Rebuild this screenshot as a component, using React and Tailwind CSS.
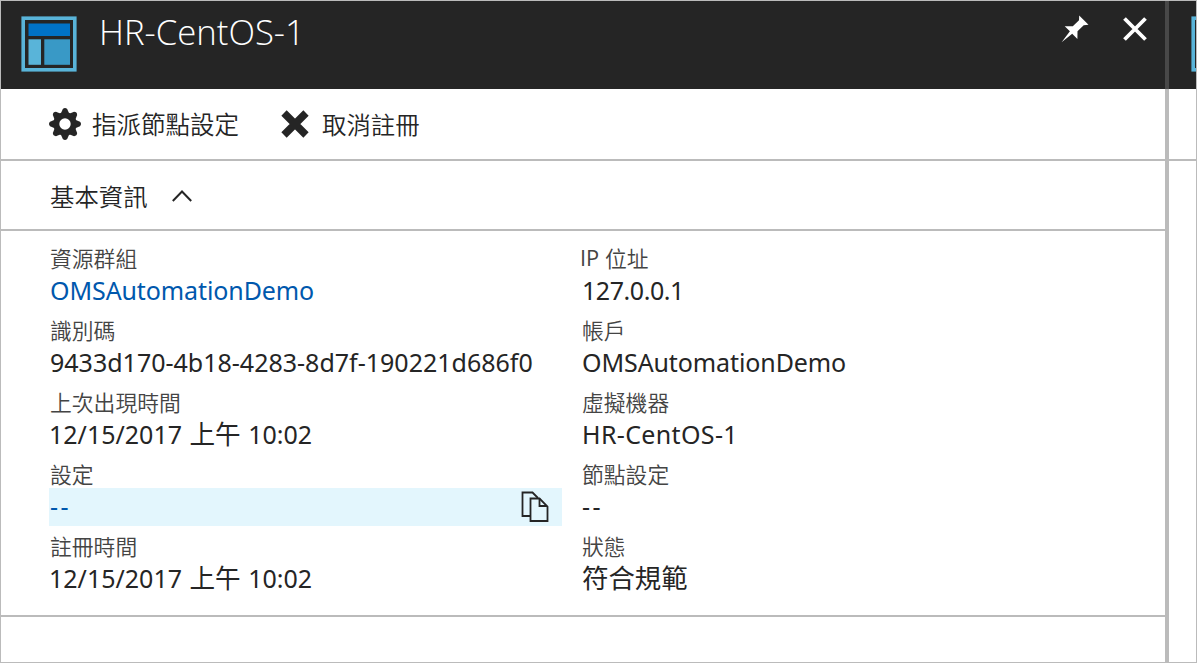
import React from "react";

const LATIN = "font-['Noto_Sans','Noto_Sans_CJK_TC',sans-serif]";
const CJK = "font-['Noto_Sans_CJK_TC',sans-serif]";

function NodeIcon() {
  return (
    <svg className="h-14 w-14 shrink-0" viewBox="0 0 56 56">
      <rect x="2.2" y="2.2" width="51.6" height="51.6" fill="#252525" stroke="#59b4d9" strokeWidth="3.6" />
      <rect x="7.5" y="7.5" width="41.5" height="12.5" fill="#0072c6" />
      <rect x="7.5" y="23.3" width="12.5" height="25.5" fill="#59b4d9" />
      <rect x="23.3" y="23.3" width="25.7" height="25.5" fill="#3999c6" />
    </svg>
  );
}

function PinIcon() {
  return (
    <svg className="h-7 w-7" viewBox="0 0 28 28" fill="#fff">
      <path d="M18.2 0.5L27.5 9.7L22.7 10.2L16.5 16.3L16.4 24L11.2 18.8L0.6 27.3L8.9 16.3L3.7 11.2L11.8 11.2L18 5.2Z" />
    </svg>
  );
}

function GearIcon() {
  const teeth = [0, 45, 90, 135, 180, 225, 270, 315];
  return (
    <svg className="h-8 w-8" viewBox="-16 -16 32 32" fill="#252525">
      {teeth.map((a) => (
        <path key={a} transform={`rotate(${a})`} d="M-4.8 -9L-2.2 -15Q0 -17 2.2 -15L4.8 -9Z" />
      ))}
      <circle r="8.7" fill="none" stroke="#252525" strokeWidth="6" />
    </svg>
  );
}

function CopyIcon() {
  return (
    <svg className="h-8 w-7" viewBox="0 0 28 32" fill="none" stroke="#252525" strokeWidth="1.8">
      <path d="M9 25H1.5V1.5H11.5L17 7" />
      <path d="M9.5 7.5H18.5L26.5 15.5V30H9.5Z" />
      <path d="M18.5 7.5V15H26" />
    </svg>
  );
}

function Field({ label, value, highlight, valueClass = "text-[#252525]", labelClass = "pl-px" }) {
  return (
    <div className="mb-1.5">
      <div className={`${CJK} ${labelClass} flex h-7 items-center whitespace-pre text-[21.8px] font-[350] leading-7 text-[#444]`}>
        {label}
      </div>
      <div
        className={`${LATIN} ${valueClass} ${highlight ? "bg-[#e3f6fd]" : ""} flex h-[38px] items-center justify-between whitespace-pre pb-px pl-px pr-[13px] text-[25px] leading-none`}
      >
        <span>{value}</span>
        {highlight && <CopyIcon />}
      </div>
    </div>
  );
}

function DateTime() {
  return (
    <span className="inline-flex items-center">
      <span className="-ml-px">12/15/2017 </span>
      <span className={`${CJK} ml-px -mt-[3px] text-[25.6px] leading-none`}>上午</span>
      <span className="ml-px"> 10:02</span>
    </span>
  );
}

export default function App() {
  return (
    <div className="flex h-[663px] w-[1197px] overflow-hidden border border-[#bbb] bg-white text-[#252525]">
      <main className="w-[1164px] shrink-0">
        <header className="flex h-[88px] items-start justify-between bg-[#252525] pl-5 pr-[18px]">
          <div className="flex items-start pt-[15px]">
            <NodeIcon />
            <h1 className="ml-[22px] -mt-1 font-['Open_Sans',sans-serif] text-[34.7px] font-light leading-10 text-white">HR-CentOS-1</h1>
          </div>
          <div className="flex items-start gap-[34px] pt-3.5">
            <PinIcon />
            <svg className="mt-0.5 h-6 w-6" viewBox="0 0 24 24" stroke="#fff" strokeWidth="3.8">
              <path d="M1.5 1.5L22.5 22.5M22.5 1.5L1.5 22.5" />
            </svg>
          </div>
        </header>
        <nav className="flex h-[72px] items-center border-b-2 border-[#bbb] pl-12 text-[24.4px] font-[350]">
          <GearIcon />
          <span className={`${CJK} ml-[11px] w-[148px] whitespace-nowrap text-[24.5px]`}>指派節點設定</span>
          <svg className="ml-[41px] h-7 w-7" viewBox="0 0 28 28" stroke="#252525" strokeWidth="7.5">
            <path d="M3 3L25 25M25 3L3 25" />
          </svg>
          <span className={`${CJK} ml-[13px] whitespace-nowrap`}>取消註冊</span>
        </nav>
        <div className="flex h-[70px] items-center border-b-2 border-[#bbb] pl-[49px] pt-0.5">
          <span className={`${CJK} text-[24.4px] font-[350]`}>基本資訊</span>
          <svg className="ml-6 h-3 w-5" viewBox="0 0 20 12" fill="none" stroke="#252525" strokeWidth="2">
            <path d="M0.8 11L10 1.5L19.2 11" />
          </svg>
        </div>
        <section className="flex h-[386px] gap-[19px] border-b-2 border-[#bbb] pl-12 pt-[13px]">
          <div className="w-[513px]">
            <Field label="資源群組" value="OMSAutomationDemo" valueClass="text-[#0058ad] tracking-[-0.1px]" />
            <Field label="識別碼" value="9433d170-4b18-4283-8d7f-190221d686f0" />
            <Field label="上次出現時間" value={<DateTime />} />
            <Field label="設定" value="--" highlight valueClass="text-[#0058ad] tracking-[2.5px]" />
            <Field label="註冊時間" value={<DateTime />} />
          </div>
          <div className="w-[513px]">
            <Field
              label={<><span className="font-['Open_Sans',sans-serif] font-normal">IP </span><span>位址</span></>}
              value="127.0.0.1"
              valueClass="text-[#252525] tracking-[-0.45px]"
              labelClass="-ml-px"
            />
            <Field label="帳戶" value="OMSAutomationDemo" valueClass="text-[#252525] tracking-[-0.1px]" />
            <Field label="虛擬機器" value="HR-CentOS-1" valueClass="text-[#252525] tracking-[0.35px]" />
            <Field label="節點設定" value="--" valueClass="text-[#252525] tracking-[2.5px]" />
            <Field label="狀態" value={<span className="text-[26.4px] leading-none">符合規範</span>} valueClass="text-[#252525]" />
          </div>
        </section>
      </main>
      <div className="w-1 shrink-0 bg-[#bbb]">
        <div className="h-[88px] bg-[#484848]" />
      </div>
      <aside className="w-[27px] shrink-0 overflow-hidden">
        <div className="h-[88px] bg-[#252525] pl-[22px] pt-[15px]">
          <NodeIcon />
        </div>
        <div className="h-[72px] border-b-2 border-[#bbb]" />
      </aside>
    </div>
  );
}
